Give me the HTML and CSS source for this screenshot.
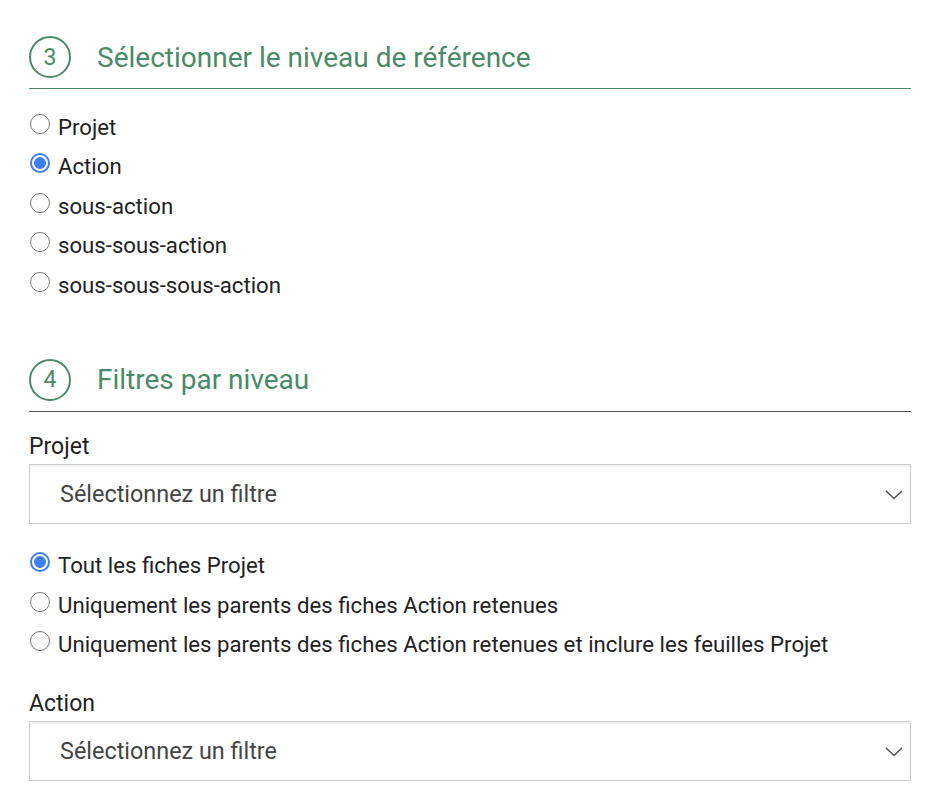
FILE: index.html
```html
<!DOCTYPE html>
<html lang="fr">
<head>
<meta charset="utf-8">
<link rel="stylesheet" href="styles.css">
</head>
<body>
<div class="page">
  <section class="step">
    <h2 class="step-title"><span class="step-num">3</span><span>Sélectionner le niveau de référence</span></h2>
    <div class="radios">
      <label class="radio"><input type="radio" name="lvl"><span>Projet</span></label>
      <label class="radio"><input type="radio" name="lvl" checked><span>Action</span></label>
      <label class="radio"><input type="radio" name="lvl"><span>sous-action</span></label>
      <label class="radio"><input type="radio" name="lvl"><span>sous-sous-action</span></label>
      <label class="radio"><input type="radio" name="lvl"><span>sous-sous-sous-action</span></label>
    </div>
  </section>
  <section class="step step2">
    <h2 class="step-title"><span class="step-num">4</span><span>Filtres par niveau</span></h2>
    <div class="field">
      <div class="field-label">Projet</div>
      <div class="select"><span>Sélectionnez un filtre</span>
        <svg class="chev" width="18" height="10" viewBox="0 0 18 10"><path d="M1 1 L9 8.5 L17 1" fill="none" stroke="#555" stroke-width="1.6"/></svg>
      </div>
    </div>
    <div class="radios radios-sub">
      <label class="radio"><input type="radio" name="p" checked><span>Tout les fiches Projet</span></label>
      <label class="radio"><input type="radio" name="p"><span>Uniquement les parents des fiches Action retenues</span></label>
      <label class="radio"><input type="radio" name="p"><span>Uniquement les parents des fiches Action retenues et inclure les feuilles Projet</span></label>
    </div>
    <div class="field field2">
      <div class="field-label">Action</div>
      <div class="select"><span>Sélectionnez un filtre</span>
        <svg class="chev" width="18" height="10" viewBox="0 0 18 10"><path d="M1 1 L9 8.5 L17 1" fill="none" stroke="#555" stroke-width="1.6"/></svg>
      </div>
    </div>
  </section>
</div>
</body>
</html>
```
FILE: styles.css
```css
* { box-sizing: border-box; }
html, body { margin: 0; padding: 0; background: #fff; }
body { font-family: Roboto, "Liberation Sans", sans-serif; color: #222; }
.page { padding: 36px 27px 0 29px; }
.step-title {
  margin: 0;
  display: flex;
  align-items: center;
  gap: 26px;
  font-size: 28px;
  font-weight: 400;
  color: #4a8a68;
  padding-bottom: 10px;
  border-bottom: 1px solid #4a8a68;
  height: 53px;
}
.step2 { margin-top: 55px; }
.step2 .step-title { border-bottom-color: #555; }
.step-num {
  width: 42px; height: 42px;
  border: 2px solid #4a8a68;
  border-radius: 50%;
  display: flex; align-items: center; justify-content: center;
  font-size: 23px;
  color: #4a8a68;
  flex: none;
}
.radios { margin-top: 17px; display: flex; flex-direction: column; }
.radio {
  display: flex; align-items: center; gap: 8px;
  height: 39.5px;
  font-size: 22.2px;
  color: #222;
}
.radio span { margin-top: 2px; }
.radio input {
  appearance: none;
  -webkit-appearance: none;
  margin: 0 0 4px 1px;
  width: 20px; height: 20px;
  border: 1.3px solid #777;
  border-radius: 50%;
  background: #fff;
  flex: none;
}
.radio input:checked {
  border: 2px solid #3b7ff2;
  background: radial-gradient(circle, #3b7ff2 0 5.5px, #fff 6.2px);
}
.field { margin-top: 15px; }
.field-label { font-size: 23px; color: #222; height: 37px; line-height: 40px; }
.select {
  height: 60px;
  border: 1px solid #ccc;
  box-shadow: inset 0 2px 2px rgba(0,0,0,0.06);
  display: flex; align-items: center; justify-content: space-between;
  padding: 0 7px 0 30px;
  font-size: 23.4px;
  color: #444;
}
.chev { margin-top: 2px; }
.radios-sub { margin-top: 21px; }
.field2 { margin-top: 21px; }
```
